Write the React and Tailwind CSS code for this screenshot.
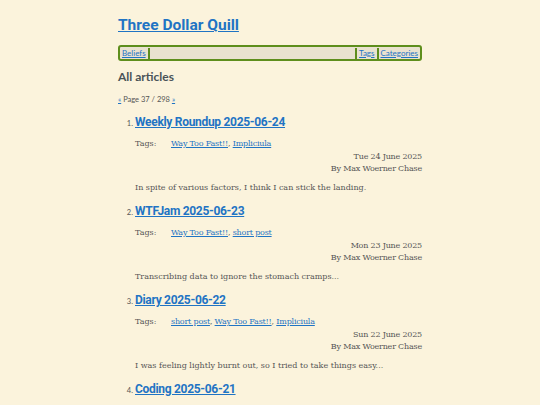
import React from 'react';

const articles = [
  {
    n: 1,
    title: 'Weekly Roundup 2025-06-24',
    tags: ['Way Too Fast!!', 'Impliciula'],
    date: 'Tue 24 June 2025',
    excerpt: 'In spite of various factors, I think I can stick the landing.',
  },
  {
    n: 2,
    title: 'WTFJam 2025-06-23',
    tags: ['Way Too Fast!!', 'short post'],
    date: 'Mon 23 June 2025',
    excerpt: 'Transcribing data to ignore the stomach cramps...',
  },
  {
    n: 3,
    title: 'Diary 2025-06-22',
    tags: ['short post', 'Way Too Fast!!', 'Impliciula'],
    date: 'Sun 22 June 2025',
    excerpt: 'I was feeling lightly burnt out, so I tried to take things easy...',
  },
  {
    n: 4,
    title: 'Coding 2025-06-21',
    tags: ['Way Too Fast!!'],
    date: 'Sat 21 June 2025',
    excerpt: '',
  },
];

const sans = "font-['Lato','Open_Sans',sans-serif]";
const head = "font-['Roboto','Lato',sans-serif]";
const serif = "font-['DejaVu_Serif','Liberation_Serif',serif]";

const Article = ({ a }) => (
  <li className="flex">
    <span className={`${sans} w-[17px] shrink-0 pt-[7px] text-right pr-[2px] text-[7.5px] text-[#555]`}>{a.n}.</span>
    <div className="flex-1">
      <h3 className={`${head} text-[12px] font-bold leading-[22px] tracking-[-0.3px]`}>
        <a href="#" className="text-[#1f74c4] underline">{a.title}</a>
      </h3>
      <div className={`${serif} mt-[6px] flex text-[8px] leading-[10px] text-[#555]`}>
        <span className="w-[36px]">Tags:</span>
        <span className="tracking-[-0.2px]">
          {a.tags.map((t, i) => (
            <span key={t}>
              <a href="#" className="text-[#1f74c4] underline">{t}</a>
              {i < a.tags.length - 1 && ', '}
            </span>
          ))}
        </span>
      </div>
      <div className={`${serif} mt-[2px] text-right text-[8px] leading-[12px] tracking-[-0.2px] text-[#555]`}>
        <div>{a.date}</div>
        <div>By Max Woerner Chase</div>
      </div>
      <p className={`${serif} mt-[7px] text-[8px] leading-[12px] text-[#555]`}>{a.excerpt}</p>
    </div>
  </li>
);

const App = () => {
  return (
    <div className="h-[405px] overflow-hidden bg-[#fbf3dc]">
      <div className="mx-auto w-[304px] pt-[13px]">
        <h1 className={`${head} text-[15.5px] font-bold leading-[24px]`}>
          <a href="#" className="text-[#1f74c4] underline">Three Dollar Quill</a>
        </h1>
        <nav className={`${sans} mt-[8px] flex h-[16px] items-center rounded-[3px] border-2 border-[#5e8e1c] bg-[#e9e2cf] text-[8px]`}>
          <a href="#" className="border-r-2 border-[#5e8e1c] px-[2px] leading-[11px] text-[#1f74c4] underline">Beliefs</a>
          <div className="flex-1" />
          <a href="#" className="border-l-2 border-[#5e8e1c] px-[2px] leading-[11px] text-[#1f74c4] underline">Tags</a>
          <a href="#" className="border-l-2 border-[#5e8e1c] px-[2px] leading-[11px] text-[#1f74c4] underline">Categories</a>
        </nav>
        <h2 className={`${sans} mt-[7px] text-[12px] font-bold leading-[18px] text-[#4a5358]`}>All articles</h2>
        <p className={`${sans} mt-[8px] text-[7.5px] leading-[12px] text-[#555]`}>
          <a href="#" className="text-[#1f74c4] underline">«</a> Page 37 / 298{' '}
          <a href="#" className="text-[#1f74c4] underline">»</a>
        </p>
        <ol className="mt-[5px] flex flex-col gap-[6px]">
          {articles.map((a) => (
            <Article key={a.n} a={a} />
          ))}
        </ol>
      </div>
    </div>
  );
};

export default App;
